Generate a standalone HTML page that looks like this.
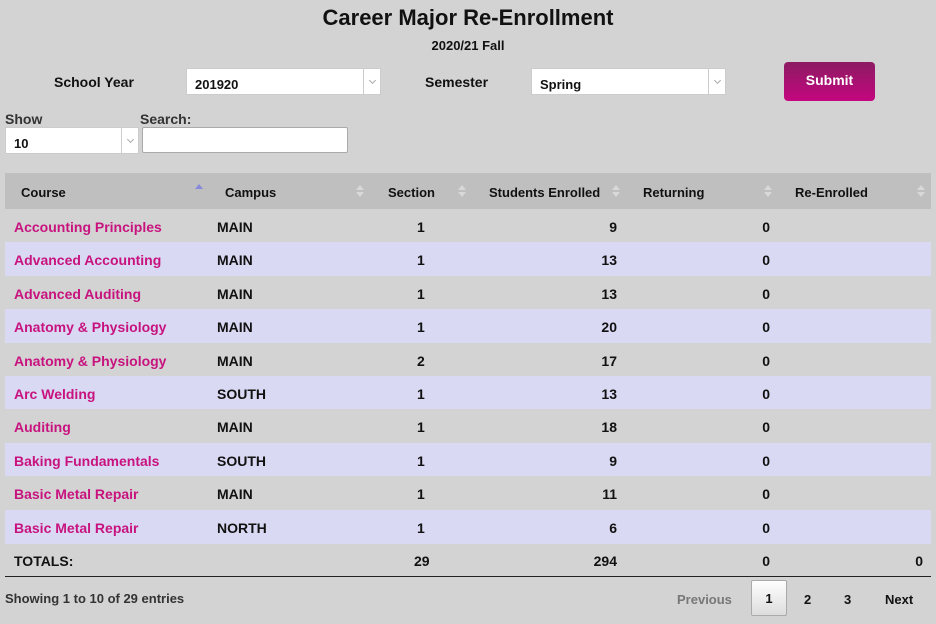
<!DOCTYPE html>
<html><head><style>
*{margin:0;padding:0;box-sizing:border-box}
body{width:936px;height:624px;background:#d3d3d3;font-family:"Liberation Sans",sans-serif;font-weight:bold;color:#111;position:relative;overflow:hidden;font-size:14px}
.a{position:absolute;white-space:nowrap}
.sel{position:absolute;background:#fff;border:1px solid #ccc;height:27px;font-size:13px;padding:8px 0 0 8px}
.sel:after{content:"";position:absolute;right:0;top:0;width:16px;height:25px;border-left:1px solid #ccc}
.sel i{position:absolute;right:5px;top:9px;width:5px;height:5px;border-right:1px solid #aaa;border-bottom:1px solid #aaa;transform:rotate(45deg);font-style:normal}
.row{position:absolute;left:5px;width:926px;height:34px}
.row span{position:absolute;top:10px}
.c1{left:9px;color:#c8137f}
.c2{left:212px}
.c3{left:412px}
.c4{right:314px}
.c5{right:161px}
.s{position:absolute;width:0;height:0;border-left:4px solid transparent;border-right:4px solid transparent}
.u{top:12px;border-bottom:5px solid #d8d8d8}
.d{top:19px;border-top:5px solid #d8d8d8}
</style></head><body>
<div class="a" style="left:0;width:936px;text-align:center;top:5px;font-size:22px">Career Major Re-Enrollment</div>
<div class="a" style="left:0;width:936px;text-align:center;top:38px;font-size:13px">2020/21 Fall</div>
<div class="a" style="left:54px;top:74px">School Year</div>
<div class="sel" style="left:186px;top:68px;width:195px">201920<i></i></div>
<div class="a" style="left:425px;top:74px">Semester</div>
<div class="sel" style="left:531px;top:68px;width:195px">Spring<i></i></div>
<div class="a" style="left:784px;top:62px;width:91px;height:39px;border-radius:4px;background:linear-gradient(#8c1c62,#c4067f);color:#fff;text-align:center;line-height:37px;font-size:14px">Submit</div>
<div class="a" style="left:5px;top:111px;font-size:14px;color:#333">Show</div>
<div class="a" style="left:140px;top:111px;font-size:14px;color:#333">Search:</div>
<div class="sel" style="left:5px;top:127px;width:134px">10<i></i></div>
<div class="a" style="left:142px;top:127px;width:206px;height:26px;background:#fff;border:1px solid #aaa;border-radius:2px"></div>

<div class="row" style="top:173px;height:36px;background:#bfbfbf;font-size:13px">
<span style="left:16px;top:12px">Course</span><span style="left:220px;top:12px">Campus</span><span style="left:383px;top:12px">Section</span><span style="left:484px;top:12px">Students Enrolled</span><span style="left:638px;top:12px">Returning</span><span style="left:790px;top:12px">Re-Enrolled</span>
<b class="s" style="left:190px;top:11px;border-bottom:5px solid #8888dd"></b>
<b class="s u" style="left:351px"></b><b class="s d" style="left:351px"></b>
<b class="s u" style="left:453px"></b><b class="s d" style="left:453px"></b>
<b class="s u" style="left:607px"></b><b class="s d" style="left:607px"></b>
<b class="s u" style="left:759px"></b><b class="s d" style="left:759px"></b>
<b class="s u" style="left:912px"></b><b class="s d" style="left:912px"></b>
</div>
<div id="rows"></div>
<script>
var d=[["Accounting Principles","MAIN",1,9],["Advanced Accounting","MAIN",1,13],["Advanced Auditing","MAIN",1,13],["Anatomy & Physiology","MAIN",1,20],["Anatomy & Physiology","MAIN",2,17],["Arc Welding","SOUTH",1,13],["Auditing","MAIN",1,18],["Baking Fundamentals","SOUTH",1,9],["Basic Metal Repair","MAIN",1,11],["Basic Metal Repair","NORTH",1,6]];
var h="";d.forEach(function(r,i){var t=209+i*33.4;h+='<div class="row" style="top:'+t+'px;background:'+(i%2?'#d9d9f3':'#d3d3d3')+'"><span class="c1">'+r[0].replace('&','&amp;')+'</span><span class="c2">'+r[1]+'</span><span class="c3">'+r[2]+'</span><span class="c4">'+r[3]+'</span><span class="c5">0</span></div>'});
document.getElementById('rows').innerHTML=h;
</script>
<div class="row" style="top:543px;border-bottom:1px solid #222;height:34px"><span style="left:9px">TOTALS:</span><span style="left:409px">29</span><span class="c4">294</span><span class="c5">0</span><span style="right:8px">0</span></div>
<div class="a" style="left:5px;top:591px;font-size:13px;color:#333">Showing 1 to 10 of 29 entries</div>
<div class="a" style="left:677px;top:592px;color:#777;font-size:13px">Previous</div>
<div class="a" style="left:751px;top:580px;width:36px;height:36px;border:1px solid #aaa;border-radius:2px;background:linear-gradient(#fff,#ddd);text-align:center;line-height:36px;font-size:13px">1</div>
<div class="a" style="left:804px;top:592px;font-size:13px">2</div>
<div class="a" style="left:844px;top:592px;font-size:13px">3</div>
<div class="a" style="left:885px;top:592px;font-size:13px">Next</div>
</body></html>
